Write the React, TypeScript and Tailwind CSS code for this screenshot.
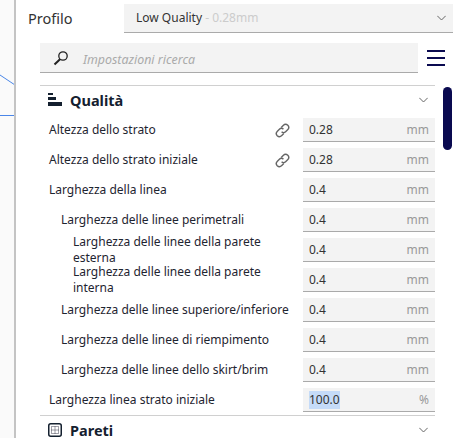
const font = 'font-["Noto_Sans",sans-serif]';

const Chevron = () => (
  <svg width="9" height="6" viewBox="0 0 9 6" fill="none" stroke="#666" strokeWidth="1" className="shrink-0">
    <path d="M0.3 0.8 L4.5 5 L8.7 0.8" />
  </svg>
);

const LinkIcon = () => (
  <svg width="15" height="15" viewBox="0 0 15 15" fill="none" stroke="#666" strokeWidth="1.4" className="shrink-0">
    <path d="M6.2 4.4 L8.2 2.4 C9.4 1.2 11.4 0.9 12.8 2.2 C14.1 3.6 13.8 5.6 12.6 6.8 L10.6 8.8 C9.4 10 7.6 10 6.6 8.8" />
    <path d="M8.8 10.6 L6.8 12.6 C5.6 13.8 3.6 14.1 2.2 12.8 C0.9 11.4 1.2 9.4 2.4 8.2 L4.4 6.2 C5.6 5 7.4 5 8.4 6.2" />
  </svg>
);

interface RowProps {
  label: string;
  value: string;
  unit?: string;
  indent?: 0 | 1 | 2;
  linked?: boolean;
  selected?: boolean;
}

const Row = ({ label, value, unit = 'mm', indent = 0, linked, selected }: RowProps) => (
  <div className="flex h-[30px] items-center">
    <div
      className={`min-w-0 flex-1 pr-[8px] text-[12px] leading-[16px] text-[#1e2430] ${
        indent === 2 ? 'pl-[33px]' : indent === 1 ? 'pl-[21px]' : 'pl-[9px]'
      }`}
    >
      {label}
    </div>
    {linked && (
      <div className="mr-[13px]">
        <LinkIcon />
      </div>
    )}
    <div className="flex h-[24px] w-[132px] items-center justify-between border-b border-[#aaa] bg-[#f3f3f3] px-[6px] text-[12px] text-[#333]">
      <span className={selected ? 'bg-[#c5dbf8]' : ''}>{value}</span>
      <span className="text-[#999]">{unit}</span>
    </div>
  </div>
);

const Section = ({ title, icon }: { title: string; icon: React.ReactNode }) => (
  <div className="flex h-[27px] items-center pl-[8px] pr-[7px]">
    <div className="flex w-[22px]">{icon}</div>
    <span className="text-[14.5px] font-bold leading-[16px] text-[#14202f]">{title}</span>
    <div className="ml-auto">
      <Chevron />
    </div>
  </div>
);

export default function App() {
  return (
    <div className={`relative h-[438px] w-[453px] overflow-hidden bg-white ${font}`}>
      {/* viewport strip */}
      <div className="absolute left-0 top-0 h-full w-[16px] border-r-2 border-[#c4c4c4] bg-[#fafafa]">
        <svg width="14" height="120" className="absolute left-0 top-0">
          <path d="M0 75 L15 85" stroke="#4a86e8" fill="none" />
          <path d="M0 115.5 H15" stroke="#4a86e8" fill="none" />
        </svg>
      </div>

      <div className="ml-[16px] flex flex-col">
        <div className="flex h-[36px] items-center pl-[12px]">
          <span className="w-[96px] text-[14.5px] leading-[18px] text-[#333]">Profilo</span>
          <div className="flex h-[29px] flex-1 items-center justify-between border-b border-[#aaa] bg-[#f3f3f3] pl-[12px] pr-[7px] text-[12px] text-[#333]">
            <span>
              Low Quality <span className="text-[#ccc]">- 0.28mm</span>
            </span>
            <Chevron />
          </div>
        </div>

        <div className="mt-[7px] flex items-center pl-[24px]">
          <div className="flex h-[30px] w-[378px] items-center border-b border-[#aaa] bg-[#f3f3f3] pl-[13px]">
            <svg width="16" height="16" viewBox="0 0 16 16" fill="none" stroke="#222" className="mr-[14px]">
              <circle cx="10" cy="6" r="4.2" strokeWidth="1.3" />
              <path d="M7 9.2 L1.5 14.5" strokeWidth="2" />
            </svg>
            <span className="pt-[5px] text-[12.4px] italic text-[#aaa]">Impostazioni ricerca</span>
          </div>
          <div className="ml-[9px] flex w-[18px] flex-col gap-[5px]">
            <div className="h-[2px] bg-[#0a0a50]" />
            <div className="h-[2px] bg-[#0a0a50]" />
            <div className="h-[2px] bg-[#0a0a50]" />
          </div>
        </div>

        <div className="ml-[24px] mt-[12px] w-[395px] border-t border-[#d0d0d0]">
          <Section
            title="Qualità"
            icon={
              <svg width="14" height="14" viewBox="0 0 14 14" fill="#14202f">
                <rect x="0" y="0" width="5" height="2" />
                <rect x="0" y="4" width="8" height="3" />
                <rect x="0" y="9" width="14" height="4" />
              </svg>
            }
          />
          <div className="pt-[2px]">
            <Row label="Altezza dello strato" value="0.28" linked />
            <Row label="Altezza dello strato iniziale" value="0.28" linked />
            <Row label="Larghezza della linea" value="0.4" />
            <Row label="Larghezza delle linee perimetrali" value="0.4" indent={1} />
            <Row label="Larghezza delle linee della parete esterna" value="0.4" indent={2} />
            <Row label="Larghezza delle linee della parete interna" value="0.4" indent={2} />
            <Row label="Larghezza delle linee superiore/inferiore" value="0.4" indent={1} />
            <Row label="Larghezza delle linee di riempimento" value="0.4" indent={1} />
            <Row label="Larghezza delle linee dello skirt/brim" value="0.4" indent={1} />
            <Row label="Larghezza linea strato iniziale" value="100.0" unit="%" selected />
          </div>
          <div className="border-t border-[#d0d0d0]">
            <Section
              title="Pareti"
              icon={
                <svg width="14" height="14" viewBox="0 0 14 14" fill="none">
                  <rect x="0.75" y="0.75" width="12.5" height="12.5" rx="2" stroke="#14202f" strokeWidth="1.5" />
                  <path d="M3.5 3.5h7v7h-7z M7 3.5v7 M3.5 7h7" stroke="#445" strokeWidth="1" strokeDasharray="1 1" />
                </svg>
              }
            />
          </div>
        </div>
      </div>

      {/* scrollbar */}
      <div className="absolute left-[443px] top-[87px] h-[63px] w-[9px] rounded-full bg-[#0a0a50]" />
    </div>
  );
}
